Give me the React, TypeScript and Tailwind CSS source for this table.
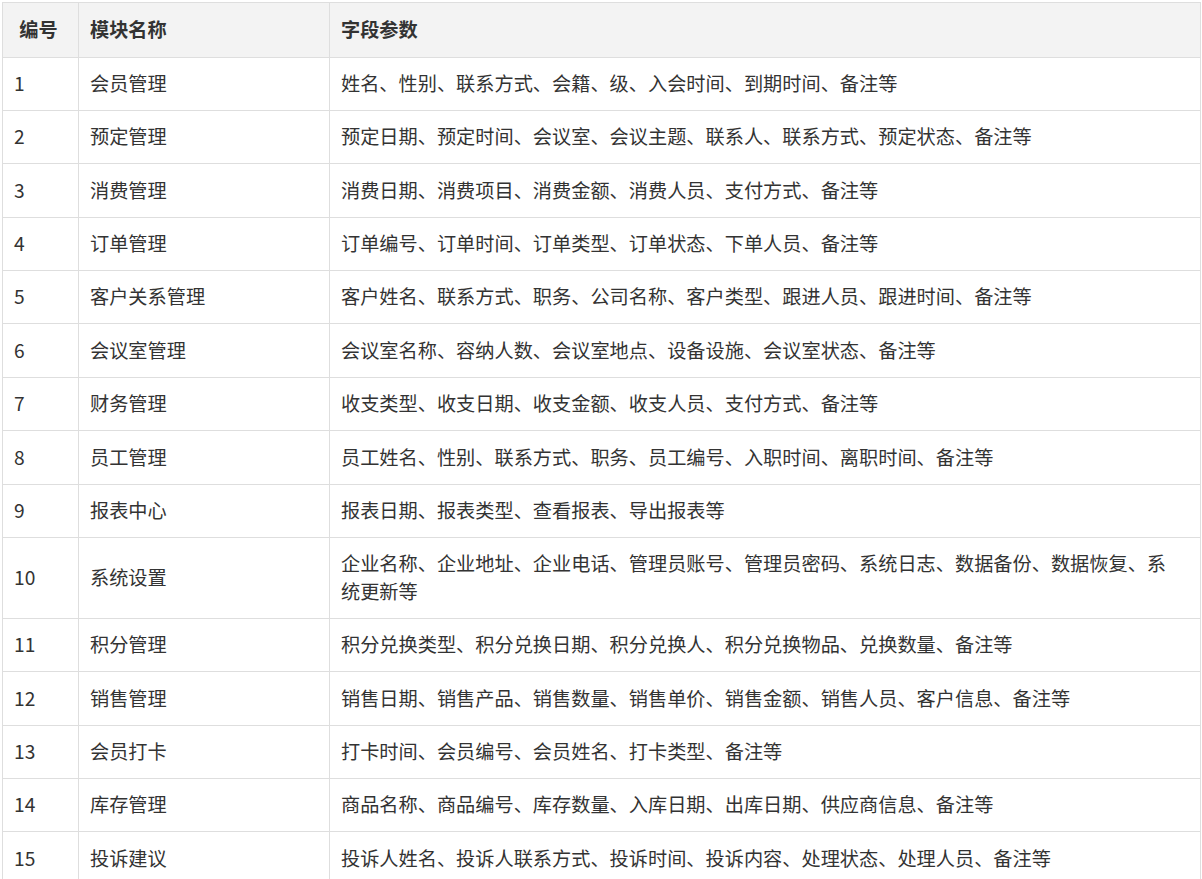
const rows: [string, string, string][] = [
  ['1', '会员管理', '姓名、性别、联系方式、会籍、级、入会时间、到期时间、备注等'],
  ['2', '预定管理', '预定日期、预定时间、会议室、会议主题、联系人、联系方式、预定状态、备注等'],
  ['3', '消费管理', '消费日期、消费项目、消费金额、消费人员、支付方式、备注等'],
  ['4', '订单管理', '订单编号、订单时间、订单类型、订单状态、下单人员、备注等'],
  ['5', '客户关系管理', '客户姓名、联系方式、职务、公司名称、客户类型、跟进人员、跟进时间、备注等'],
  ['6', '会议室管理', '会议室名称、容纳人数、会议室地点、设备设施、会议室状态、备注等'],
  ['7', '财务管理', '收支类型、收支日期、收支金额、收支人员、支付方式、备注等'],
  ['8', '员工管理', '员工姓名、性别、联系方式、职务、员工编号、入职时间、离职时间、备注等'],
  ['9', '报表中心', '报表日期、报表类型、查看报表、导出报表等'],
  ['10', '系统设置', '企业名称、企业地址、企业电话、管理员账号、管理员密码、系统日志、数据备份、数据恢复、系统更新等'],
  ['11', '积分管理', '积分兑换类型、积分兑换日期、积分兑换人、积分兑换物品、兑换数量、备注等'],
  ['12', '销售管理', '销售日期、销售产品、销售数量、销售单价、销售金额、销售人员、客户信息、备注等'],
  ['13', '会员打卡', '打卡时间、会员编号、会员姓名、打卡类型、备注等'],
  ['14', '库存管理', '商品名称、商品编号、库存数量、入库日期、出库日期、供应商信息、备注等'],
  ['15', '投诉建议', '投诉人姓名、投诉人联系方式、投诉时间、投诉内容、处理状态、处理人员、备注等'],
];

const cell = 'border border-[#dedede] pl-[11px] pr-[15px] py-[12.45px]';
const head = 'border border-[#dedede] pl-[11px] pr-[15px] py-[13px] font-bold';

export default function App() {
  return (
    <div
      className="bg-white p-[2px] text-[#333] text-[19.2px] leading-[27.5px]"
      style={{ fontFamily: '"Microsoft YaHei", "Noto Sans CJK SC", "Noto Sans", sans-serif' }}
    >
      <table className="w-[1199px] table-fixed border-collapse">
        <colgroup>
          <col className="w-[76px]" />
          <col className="w-[251px]" />
          <col />
        </colgroup>
        <thead>
          <tr className="bg-[#f3f3f3]">
            <th className={`${head} text-center`}>编号</th>
            <th className={`${head} text-left`}>模块名称</th>
            <th className={`${head} text-left`}>字段参数</th>
          </tr>
        </thead>
        <tbody>
          {rows.map(([no, name, fields]) => (
            <tr key={no}>
              <td className={cell}>{no}</td>
              <td className={cell}>{name}</td>
              <td className={cell}>{fields}</td>
            </tr>
          ))}
        </tbody>
      </table>
    </div>
  );
}
